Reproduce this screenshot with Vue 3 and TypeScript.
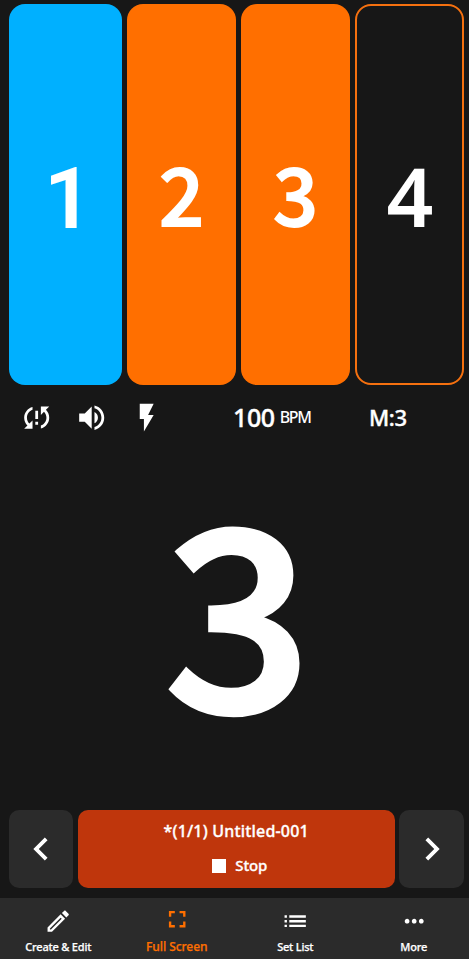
<script setup lang="ts">
interface Beat {
  label: string
  kind: 'accent' | 'filled' | 'outline'
  shape: 'one' | 'round' | 'four'
}

interface Tab {
  label: string
  icon: string
  active?: boolean
}

const beats: Beat[] = [
  { label: '1', kind: 'accent', shape: 'one' },
  { label: '2', kind: 'filled', shape: 'round' },
  { label: '3', kind: 'filled', shape: 'round' },
  { label: '4', kind: 'outline', shape: 'four' },
]

const toggles: string[] = [
  'M3 12c0 2.21.91 4.2 2.36 5.64L3 20h6v-6l-2.24 2.24C5.68 15.15 5 13.66 5 12c0-2.61 1.67-4.83 4-5.65V4.26C5.55 5.15 3 8.27 3 12zm8 5h2v-2h-2v2zM21 4h-6v6l2.24-2.24C18.32 8.85 19 10.34 19 12c0 2.61-1.67 4.83-4 5.65v2.09c3.45-.89 6-4.01 6-7.74 0-2.21-.91-4.2-2.36-5.64L21 4zm-10 9h2V7h-2v6z',
  'M3 9v6h4l5 5V4L7 9H3zm13.5 3c0-1.77-1.02-3.29-2.5-4.03v8.05c1.48-.73 2.5-2.25 2.5-4.02zM14 3.23v2.06c2.89.86 5 3.54 5 6.71s-2.11 5.85-5 6.71v2.06c4.01-.91 7-4.49 7-8.77s-2.99-7.86-7-8.77z',
  'M7 2v11h3v9l7-12h-4l4-8z',
]

const tabs: Tab[] = [
  {
    label: 'Create & Edit',
    icon: 'M14.06 9.02l.92.92L5.92 19H5v-.92l9.06-9.06M17.66 3c-.25 0-.51.1-.7.29l-1.83 1.83 3.75 3.75 1.83-1.83c.39-.39.39-1.02 0-1.41l-2.34-2.34c-.2-.2-.45-.29-.71-.29zm-3.6 3.19L3 17.25V21h3.75L17.81 9.94l-3.75-3.75z',
  },
  {
    label: 'Full Screen',
    icon: 'M7 14H5v5h5v-2H7v-3zm-2-4h2V7h3V5H5v5zm12 7h-3v2h5v-5h-2v3zM14 5v2h3v3h2V5h-5z',
    active: true,
  },
  {
    label: 'Set List',
    icon: 'M3 13h2v-2H3v2zm0 4h2v-2H3v2zm0-8h2V7H3v2zm4 4h14v-2H7v2zm0 4h14v-2H7v2zM7 7v2h14V7H7z',
  },
  {
    label: 'More',
    icon: 'M6 10c-1.1 0-2 .9-2 2s.9 2 2 2 2-.9 2-2-.9-2-2-2zm12 0c-1.1 0-2 .9-2 2s.9 2 2 2 2-.9 2-2-.9-2-2-2zm-6 0c-1.1 0-2 .9-2 2s.9 2 2 2 2-.9 2-2-.9-2-2-2z',
  },
]
</script>

<template>
  <div class="screen">
    <section class="beats">
      <div v-for="beat in beats" :key="beat.label" class="beat" :class="[beat.kind, beat.shape]">
        <span>{{ beat.label }}</span>
      </div>
    </section>

    <section class="status">
      <div class="toggles">
        <svg v-for="(path, i) in toggles" :key="i" viewBox="0 0 24 24"><path :d="path" /></svg>
      </div>
      <div class="tempo"><span class="bpm">100</span><span class="unit">BPM</span></div>
      <div class="measure">M:3</div>
    </section>

    <main class="count"><span>3</span></main>

    <section class="player">
      <button class="step">
        <svg viewBox="0 0 24 24"><path d="M15.41 7.41 14 6l-6 6 6 6 1.41-1.41L10.83 12z" /></svg>
      </button>
      <button class="song">
        <span class="title">*(1/1) Untitled-001</span>
        <span class="stop"><i class="square"></i><span>Stop</span></span>
      </button>
      <button class="step">
        <svg viewBox="0 0 24 24"><path d="M10 6 8.59 7.41 13.17 12l-4.58 4.59L10 18l6-6z" /></svg>
      </button>
    </section>

    <nav class="tabs">
      <a v-for="tab in tabs" :key="tab.label" class="tab" :class="{ active: tab.active }">
        <svg viewBox="0 0 24 24"><path :d="tab.icon" /></svg>
        <span>{{ tab.label }}</span>
      </a>
    </nav>
  </div>
</template>

<style>
body {
  margin: 0;
  background: #171717;
}
</style>

<style scoped>
.screen {
  box-sizing: border-box;
  display: flex;
  flex-direction: column;
  width: 469px;
  height: 959px;
  padding-top: 4px;
  overflow: hidden;
  background: #171717;
  color: #fff;
  font-family: 'Noto Sans', 'Open Sans', sans-serif;
  font-weight: 500;
}

svg {
  display: block;
  flex: none;
  fill: currentColor;
}

.beats {
  display: grid;
  grid-template-columns: 113.5px 109px 109px 109px;
  column-gap: 5px;
  height: 381px;
  padding-left: 8.5px;
}

.beat {
  box-sizing: border-box;
  display: flex;
  align-items: center;
  justify-content: center;
  border-radius: 16px;
  font-size: 84px;
  font-weight: 600;
  line-height: 1;
}

.one {
  padding-top: 10px;
  padding-left: 6px;
  font-family: Roboto, sans-serif;
  font-size: 85px;
}

.round {
  padding-bottom: 7px;
  font-family: 'Noto Sans CJK JP', sans-serif;
  font-size: 79px;
  font-weight: 500;
  -webkit-text-stroke: 1.8px #fff;
}

.four {
  padding-left: 1px;
  font-size: 82px;
}

.accent {
  background: #00b0ff;
}

.filled {
  background: #ff6f00;
}

.outline {
  border: 2px solid #f5700f;
}

.status {
  display: grid;
  grid-template-columns: 233px 136px 1fr;
  align-items: center;
  height: 65px;
  -webkit-text-stroke: 0.4px currentColor;
}

.toggles {
  display: flex;
  gap: 21.8px;
  padding-left: 19.6px;
}

.toggles svg {
  width: 33.4px;
  height: 33.4px;
}

.tempo {
  display: flex;
  align-items: center;
  padding-bottom: 2px;
  line-height: 30px;
}

.bpm {
  font-size: 25px;
  letter-spacing: -0.4px;
}

.unit {
  margin-left: 5px;
  font-size: 16px;
  letter-spacing: -1.3px;
  -webkit-text-stroke-width: 0;
}

.measure {
  padding-bottom: 2px;
  font-size: 22px;
  line-height: 30px;
  letter-spacing: -0.4px;
}

.count {
  display: flex;
  flex: 1;
  align-items: center;
  justify-content: center;
  padding: 0 0 55px 7px;
  font-family: 'Noto Sans CJK JP', sans-serif;
  font-size: 249px;
  font-weight: 500;
  line-height: 1;
  -webkit-text-stroke: 5.5px #fff;
}

.count span {
  transform: scaleX(1.03);
}

.player {
  display: grid;
  grid-template-columns: 64.5px 317px 64.5px;
  column-gap: 4.7px;
  height: 78px;
  margin-bottom: 10px;
  padding-left: 8.5px;
}

button {
  display: flex;
  align-items: center;
  justify-content: center;
  padding: 0;
  border: 0;
  border-radius: 10px;
  color: inherit;
  font: inherit;
}

.step {
  background: #2b2b2b;
}

.step svg {
  width: 46px;
  height: 46px;
}

.song {
  flex-direction: column;
  gap: 13px;
  padding-bottom: 1px;
  background: #bf360c;
  font-size: 16px;
  line-height: 21px;
  -webkit-text-stroke: 0.35px currentColor;
}

.title {
  letter-spacing: 0.18px;
}

.stop {
  display: flex;
  align-items: center;
  gap: 9px;
  padding-left: 7px;
  font-size: 15px;
  letter-spacing: -0.2px;
}

.square {
  width: 14px;
  height: 14px;
  background: #fff;
}

.tabs {
  display: grid;
  grid-template-columns: repeat(4, 118.5px);
  height: 61px;
  margin-left: -1px;
  margin-right: -1px;
  background: #2b2b2b;
}

.tab {
  display: flex;
  flex-direction: column;
  align-items: center;
  padding-top: 9px;
  font-size: 11px;
  line-height: 16px;
  letter-spacing: -0.2px;
  -webkit-text-stroke: 0.25px currentColor;
}

.tab svg {
  width: 28.4px;
  height: 28.4px;
  margin-bottom: 4px;
}

.tab.active {
  padding-top: 7px;
  color: #ff6f00;
  font-size: 12px;
  letter-spacing: -0.05px;
}

.tab.active svg {
  margin-bottom: 6px;
}
</style>
